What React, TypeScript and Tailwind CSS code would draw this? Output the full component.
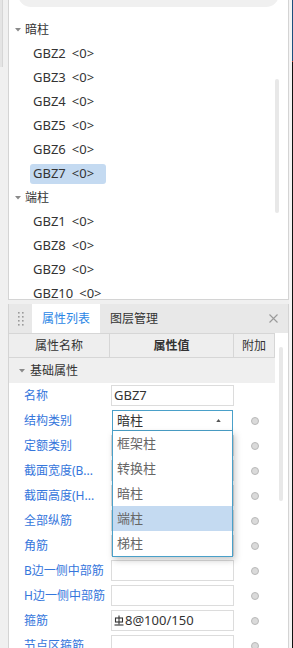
import React from "react";

type Group = { name: string; items: string[] };

const groups: Group[] = [
  { name: "暗柱", items: ["GBZ2", "GBZ3", "GBZ4", "GBZ5", "GBZ6", "GBZ7"] },
  { name: "端柱", items: ["GBZ1", "GBZ8", "GBZ9", "GBZ10"] },
];

const props: Array<{ label: string; value?: string; kind?: "select" }> = [
  { label: "名称", value: "GBZ7" },
  { label: "结构类别", value: "暗柱", kind: "select" },
  { label: "定额类别" },
  { label: "截面宽度(B..." },
  { label: "截面高度(H..." },
  { label: "全部纵筋" },
  { label: "角筋" },
  { label: "B边一侧中部筋" },
  { label: "H边一侧中部筋" },
  { label: "箍筋", value: "8@100/150" },
  { label: "节点区箍筋" },
];

const options = ["框架柱", "转换柱", "暗柱", "端柱", "梯柱"];

const Caret = ({ className = "" }: { className?: string }) => (
  <svg viewBox="0 0 6 4" className={`h-[4px] w-[6px] fill-[#8a8a8a] ${className}`}>
    <path d="M0 0h6L3 3.5z" />
  </svg>
);

// HRB400 rebar grade mark
const RebarMark = () => (
  <svg viewBox="0 0 10 12" className="mr-[1px] h-[12px] w-[10px] stroke-[#333]" fill="none" strokeWidth={1.1}>
    <path d="M5 0.5v9" />
    <rect x="1.5" y="3" width="7" height="4" />
    <path d="M0.5 10h9" />
  </svg>
);

const App: React.FC = () => {
  const selected = "GBZ7";

  return (
    <div className="flex h-[648px] w-[293px] overflow-hidden bg-[#f0f0f0] font-['Noto_Sans','Noto_Sans_CJK_SC',sans-serif] text-[#333]">
      <div className="w-[8px] flex-none">
        <div className="h-[67px] w-[3px] border-r border-[#d6d6d6] bg-[#e4e4e4]" />
      </div>

      <div className="flex w-[281px] flex-none flex-col">
        {/* component tree */}
        <div className="relative h-[300px] flex-none overflow-hidden border-x border-b border-[#d4d4d4] bg-white">
          <div className="mx-[9px] mt-[-19px] flex h-[26px] items-center rounded-full bg-[#f0f0f0] px-[12px] text-[12px] text-[#999]">
            搜索构件...
          </div>
          <div className="mt-[11px]">
            {groups.map((g) => (
              <div key={g.name}>
                <div className="flex h-[24px] items-center pl-[6px] text-[12px]">
                  <Caret className="mr-[4px]" />
                  <span>{g.name}</span>
                </div>
                {g.items.map((it) => (
                  <div key={it} className="flex h-[24px] items-center pl-[21px] text-[13px]">
                    <span
                      className={
                        it === selected
                          ? "flex h-[20px] items-center rounded-[3px] bg-[#c4daf1] pl-[3px] pr-[12px]"
                          : "flex items-center pl-[3px]"
                      }
                    >
                      {it}
                      <span className="ml-[6px]">&lt;0&gt;</span>
                    </span>
                  </div>
                ))}
              </div>
            ))}
          </div>
          <div className="absolute left-[266px] top-[79px] h-[134px] w-[4px] rounded-full bg-[#e8e8e8]" />
        </div>

        {/* property panel */}
        <div className="relative mt-[4px] flex-1 border-x border-[#d4d4d4] bg-white">
          <div className="flex h-[29px] items-stretch bg-[#e8e8e8] text-[12px]">
            <div className="flex w-[23px] items-center justify-center">
              <svg viewBox="0 0 6 14" className="h-[14px] w-[6px] fill-[#9a9a9a]">
                {[1, 5, 9, 13].map((y) => (
                  <React.Fragment key={y}>
                    <rect x="0" y={y - 1} width="1.6" height="1.6" />
                    <rect x="4" y={y - 1} width="1.6" height="1.6" />
                  </React.Fragment>
                ))}
              </svg>
            </div>
            <div className="flex items-center bg-white px-[10px] text-[#2a86e6]">属性列表</div>
            <div className="flex items-center px-[10px]">图层管理</div>
            <div className="ml-auto flex items-center pr-[10px]">
              <svg viewBox="0 0 9 9" className="h-[9px] w-[9px] stroke-[#9a9a9a]" strokeWidth={1.1}>
                <path d="M0.5 0.5l8 8M8.5 0.5l-8 8" />
              </svg>
            </div>
          </div>

          <div className="flex h-[25px] w-[266px] border-y border-[#d6d6d6] bg-[#eeeeee] text-[12px]">
            <div className="flex w-[101px] items-center justify-center border-r border-[#d6d6d6]">属性名称</div>
            <div className="flex w-[124px] items-center justify-center border-r border-[#d6d6d6] font-semibold">属性值</div>
            <div className="flex w-[41px] items-center justify-center border-r border-[#d6d6d6]">附加</div>
          </div>

          <div className="flex h-[25px] w-[266px] items-center bg-[#efefef] pl-[10px] text-[12px]">
            <Caret className="mr-[5px]" />
            基础属性
          </div>

          {props.map((p) => (
            <div key={p.label} className="flex h-[25px] w-[266px] items-center text-[12px]">
              <div className="w-[101px] pl-[15px] text-[#3576dc]">{p.label}</div>
              <div className="w-[124px] pl-[1px]">
                {p.kind === "select" ? (
                  <div className="relative ml-[1px] w-[121px]">
                    <div className="flex h-[21px] items-center border border-[#4aa0c9] bg-white pl-[4px] pr-[11px] text-[13px]">
                      {p.value}
                      <svg viewBox="0 0 6 4" className="ml-auto h-[3px] w-[5px] fill-[#555]">
                        <path d="M0 4h6L3 0z" />
                      </svg>
                    </div>
                    <div className="absolute left-0 top-full z-10 w-[121px] border border-t-0 border-[#4aa0c9] bg-white text-[13px] text-[#666] shadow-[2px_3px_7px_rgba(0,0,0,0.22)]">
                      {options.map((o) => (
                        <div
                          key={o}
                          className={`flex h-[25px] items-center pl-[4px] ${o === "端柱" ? "bg-[#c4daf1]" : ""}`}
                        >
                          {o}
                        </div>
                      ))}
                    </div>
                  </div>
                ) : (
                  <div className="flex h-[21px] w-[123px] items-center border border-[#dcdcdc] pl-[2px] text-[13px]">
                    {p.label === "箍筋" && <RebarMark />}
                    {p.value}
                  </div>
                )}
              </div>
              <div className="flex w-[41px] items-center justify-center">
                {p.label !== "名称" && (
                  <div className="h-[8px] w-[8px] rounded-full border border-[#b9b9b9] bg-[#dadada]" />
                )}
              </div>
            </div>
          ))}

          <div className="absolute left-[270px] top-[43px] h-[154px] w-[4px] rounded-full bg-[#e8e8e8]" />
        </div>
      </div>

      <div className="flex w-[4px] flex-none">
        <div className="w-[3px] bg-[#f4f4f4]" />
        <div className="flex w-[1px] flex-col">
          <div className="h-[61px] bg-[#1d4f7c]" />
          <div className="h-[1px] bg-[#c0392b]" />
          <div className="flex-1 bg-[#111]" />
        </div>
      </div>
    </div>
  );
};

export default App;
